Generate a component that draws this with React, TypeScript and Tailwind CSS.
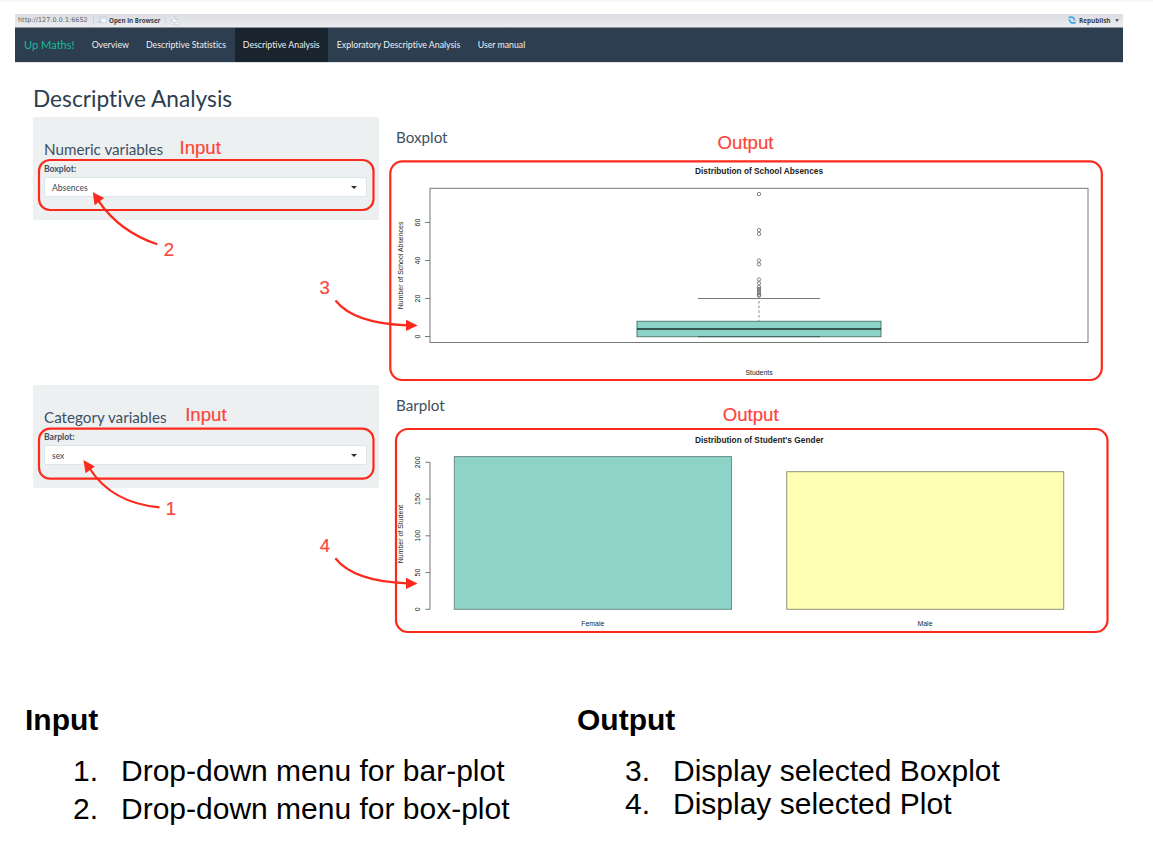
import React from "react";

const NAV = [
  { label: "Overview", cls: "w-[54.5px]" },
  { label: "Descriptive Statistics", cls: "w-[97px]" },
  { label: "Descriptive Analysis", cls: "w-[93.5px] bg-[#1a242f]" },
  { label: "Exploratory Descriptive Analysis", cls: "w-[141px]" },
  { label: "User manual", cls: "w-[65px]" },
];

const OUTLIERS = [75, 56, 54, 40, 38, 30, 28, 26, 25, 24, 23, 22, 21.5];

function Toolbar() {
  return (
    <div className="flex h-[14px] shrink-0 items-center border-b border-[#8a929c] bg-gradient-to-b from-[#dcdce2] to-[#ebecef] pl-[3px] font-['DejaVu_Sans',sans-serif] text-[6.4px] text-[#5c5c60]">
      <span className="w-[75px] whitespace-nowrap tracking-[0.06px]">http://127.0.0.1:6652</span>
      <span className="h-[8px] w-px bg-[#cfd0d4]" />
      <svg className="ml-[3px] mr-[2px] h-[9px] w-[10px]" viewBox="0 0 10 9">
        <rect x="3" y="0.7" width="6.4" height="6" rx="0.8" fill="#fbfcfe" stroke="#b9c6d8" strokeWidth="0.7" />
        <path d="M3 2.2h6.4" stroke="#b5cbe4" />
        <path d="M0.6 8V5.8Q0.8 4.3 3 4.4V3.2L5.2 5.2 3 7V5.9Q1.5 6 0.6 8Z" fill="#b9d3ec" />
      </svg>
      <span className="w-[55px] whitespace-nowrap font-['Open_Sans',sans-serif] text-[6.2px] font-bold text-[#404043]">Open in Browser</span>
      <span className="ml-[1px] h-[8px] w-px bg-[#d4d5d8]" />
      <svg className="ml-[4px] h-[9px] w-[9px]" viewBox="0 0 9 9" fill="none" stroke="#c3cbd4" strokeWidth="0.8">
        <rect x="0.5" y="0.5" width="8" height="8" rx="1" fill="#f3f4f6" stroke="#d3d6da" />
        <path d="M6.8 3.2A2.6 2.6 0 1 0 7 5.2M7 1.8V3.4H5.3" stroke="#a9b8c8" />
      </svg>
      <div className="ml-auto mr-[4px] flex items-center">
        <svg className="mr-[2px] h-[8px] w-[10px]" viewBox="0 0 10 8" fill="none" stroke="#2f9fe0" strokeWidth="1.5">
          <path d="M1.6 1.7Q4.4 0.4 6.3 1.6Q7.4 2.6 6.9 3.8" />
          <path d="M8.8 6.3Q6.2 7.7 4 6.5Q2.8 5.6 3.2 4.3" />
          <path d="M0.2 3.4H4.6L2.8 5ZM5.4 4.5H9.8L7.2 3Z" fill="#4db2ea" stroke="none" />
        </svg>
        <span className="w-[36px] whitespace-nowrap font-['Open_Sans',sans-serif] text-[6.4px] font-bold text-[#404043]">Republish</span>
        <svg className="h-[3px] w-[4px]" viewBox="0 0 4 3"><path d="M0 0.3H4L2 2.8Z" fill="#444" /></svg>
      </div>
    </div>
  );
}

function NavBar() {
  return (
    <nav className="flex h-[34px] shrink-0 bg-[#2c3e50] font-[Lato,sans-serif] text-[8.75px] text-[#eef1f3] [font-variant-ligatures:none]">
      <span className="flex w-[68px] items-center whitespace-nowrap pl-[9px] text-[11.1px] text-[#18bc9c]">Up Maths!</span>
      {NAV.map((n) => (
        <span key={n.label} className={"flex items-center justify-center whitespace-nowrap " + n.cls}>
          {n.label}
        </span>
      ))}
    </nav>
  );
}

function Well({ title, label, value }: { title: string; label: string; value: string }) {
  return (
    <section className="h-[103px] w-[346px] rounded-[2px] bg-[#ecf0f1] px-[11px] pt-[22px]">
      <h4 className="h-[24px] whitespace-nowrap text-[15.2px] leading-[20px]">{title}</h4>
      <label className="block h-[14px] text-[8.6px] font-bold leading-[13px]">{label}</label>
      <div className="flex h-[20px] w-[323px] items-center justify-between rounded-[2px] border border-[#dce4ec] bg-white pl-[7px] pr-[9px] text-[8.5px] text-[#3a4550]">
        <span className="pt-[3px]">{value}</span>
        <svg className="h-[3px] w-[6px]" viewBox="0 0 6 3"><path d="M0 0H6L3 3Z" fill="#2b2b2b" /></svg>
      </div>
    </section>
  );
}

function BoxPlot() {
  const y = (v: number) => 336.5 - v * 1.9;
  return (
    <svg className="block h-[222px] w-[712px] font-['Liberation_Sans',sans-serif]" viewBox="396 160 712 222" fill="none" stroke="#777" strokeWidth="1">
      <rect x="430" y="188.3" width="658" height="154.2" />
      {[0, 20, 40, 60].map((v) => (
        <g key={v}>
          <path d={`M425 ${y(v)}H430`} />
          <text transform={`translate(420 ${y(v)}) rotate(-90)`} textAnchor="middle" fontSize="7" fill="#222" stroke="none">{v}</text>
        </g>
      ))}
      <rect x="637" y="321.3" width="244" height="15.4" fill="#8dd3c7" stroke="#4f7f77" />
      <path d="M637 329H881" stroke="#1d2b29" strokeWidth="1.7" />
      <path d="M698 298.5H820" />
      <path d="M698 336.7H820" stroke="#3c5f5a" />
      <path d="M759 301V321" strokeDasharray="2.5 2.2" strokeWidth="0.9" />
      {OUTLIERS.map((v) => (
        <circle key={v} cx="759" cy={y(v)} r="1.7" strokeWidth="0.8" stroke="#666" />
      ))}
      <g fill="#1c1c1c" stroke="none">
        <text x="695" y="174" textLength="128" fontSize="8.3" fontWeight="bold">Distribution of School Absences</text>
        <text x="759" y="374.5" textAnchor="middle" fontSize="6.9">Students</text>
        <text transform="translate(403.3 265.4) rotate(-90)" textAnchor="middle" fontSize="6.9" textLength="87.5">Number of School Absences</text>
      </g>
    </svg>
  );
}

function BarPlot() {
  const y = (v: number) => 609.3 - v * 0.735;
  return (
    <svg className="block h-[205px] w-[712px] font-['Liberation_Sans',sans-serif]" viewBox="396 428 712 205" fill="none" stroke="#777" strokeWidth="1">
      <path d="M430 462.3V609.3" />
      {[0, 50, 100, 150, 200].map((v) => (
        <g key={v}>
          <path d={`M425.5 ${y(v)}H430`} />
          <text transform={`translate(420 ${y(v)}) rotate(-90)`} textAnchor="middle" fontSize="7" fill="#222" stroke="none">{v}</text>
        </g>
      ))}
      <rect x="454.3" y="456.6" width="277.2" height="152.7" fill="#8dd3c7" stroke="#6d8f8a" />
      <rect x="786.7" y="471.7" width="277" height="137.6" fill="#ffffb3" stroke="#92927a" />
      <g fill="#1c1c1c" stroke="none">
        <text x="695" y="442.8" textLength="128.5" fontSize="8.3" fontWeight="bold">Distribution of Student's Gender</text>
        <text x="592.8" y="626" textAnchor="middle" fontSize="6.9">Female</text>
        <text x="925" y="626" textAnchor="middle" fontSize="6.9">Male</text>
        <text transform="translate(403.3 534) rotate(-90)" textAnchor="middle" fontSize="6.9" textLength="58.5">Number of Student</text>
      </g>
    </svg>
  );
}

function Annotations() {
  return (
    <svg className="pointer-events-none absolute left-0 top-0 h-[856px] w-[1153px] font-['Liberation_Sans',sans-serif]" viewBox="0 0 1153 856" fill="none" stroke="#fc2a1c" strokeWidth="2.2">
      <rect x="39" y="160" width="334.5" height="50" rx="11" />
      <rect x="39" y="428.7" width="334.5" height="50" rx="11" />
      <rect x="390.3" y="161.4" width="711.5" height="218.6" rx="12" />
      <rect x="396" y="429" width="711.5" height="203" rx="12" />
      <path d="M157.3 244.3Q120 232 98.5 201" />
      <path d="M159.5 507.4Q112 503 90 469" />
      <path d="M335.5 300.5C347 315 369 324 407 325.3" />
      <path d="M335.3 558.3C347 573 369 582 407 583.3" />
      <g fill="#fc2a1c" stroke="none">
        <path d="M92.8 192.3L104.2 198L94.6 205.2Z" />
        <path d="M83.4 460L94.8 466.5L85.6 473.2Z" />
        <path d="M417.6 325.5L406 319.7V331Z" />
        <path d="M417.6 583.5L406 577.7V589Z" />
      </g>
      <g fill="#fb453c" stroke="#fb453c" strokeWidth="0.2" fontSize="18.6">
        <text x="179.5" y="154">Input</text>
        <text x="185.2" y="421.3">Input</text>
        <text x="717.6" y="149.4">Output</text>
        <text x="722.8" y="420.8">Output</text>
        <text x="163.7" y="255.5">2</text>
        <text x="165.8" y="515.3">1</text>
        <text x="319.6" y="294.3">3</text>
        <text x="319.8" y="552.3">4</text>
      </g>
    </svg>
  );
}

function Notes({ title, start, items, gap }: { title: string; start: number; items: string[]; gap: string }) {
  return (
    <section className="w-[552px]">
      <h2 className="text-[30px] font-bold leading-[34px]">{title}</h2>
      <ol className={"mt-[17px] flex flex-col pl-[48px] text-[30px] leading-[34px] " + gap}>
        {items.map((t, i) => (
          <li key={t} className="flex whitespace-nowrap">
            <span className="w-[48px]">{start + i}.</span>
            <span>{t}</span>
          </li>
        ))}
      </ol>
    </section>
  );
}

export default function App() {
  return (
    <div className="relative flex h-[856px] w-[1153px] flex-col overflow-hidden bg-white">
      <div className="h-[3px] shrink-0 bg-gradient-to-b from-[#f3f3f3] to-white" />
      <div className="mt-[11px] flex h-[679px] w-[1108px] shrink-0 flex-col self-start ml-[15px]">
        <Toolbar />
        <NavBar />
        <div className="h-px shrink-0 bg-[#dde1e5]" />
        <main className="pl-[18px] font-[Lato,sans-serif] text-[#3d4f61] [font-variant-ligatures:none]">
          <h1 className="h-[54px] whitespace-nowrap pt-[22px] text-[22.7px] leading-[28px] text-[#2c3e50]">Descriptive Analysis</h1>
          <div className="flex h-[268px] gap-[17px]">
            <Well title="Numeric variables" label="Boxplot:" value="Absences" />
            <div>
              <h4 className="h-[43px] pt-[10px] text-[15.2px] leading-[20px]">Boxplot</h4>
              <BoxPlot />
            </div>
          </div>
          <div className="flex h-[268px] gap-[17px]">
            <Well title="Category variables" label="Barplot:" value="sex" />
            <div>
              <h4 className="h-[43px] pt-[10px] text-[15.2px] leading-[20px]">Barplot</h4>
              <BarPlot />
            </div>
          </div>
        </main>
      </div>
      <footer className="mt-[10px] flex pl-[25px] font-['Liberation_Sans',sans-serif] text-black">
        <Notes title="Input" start={1} items={["Drop-down menu for bar-plot", "Drop-down menu for box-plot"]} gap="gap-[4px]" />
        <Notes title="Output" start={3} items={["Display selected Boxplot", "Display selected Plot"]} gap="-space-y-px" />
      </footer>
      <Annotations />
    </div>
  );
}
